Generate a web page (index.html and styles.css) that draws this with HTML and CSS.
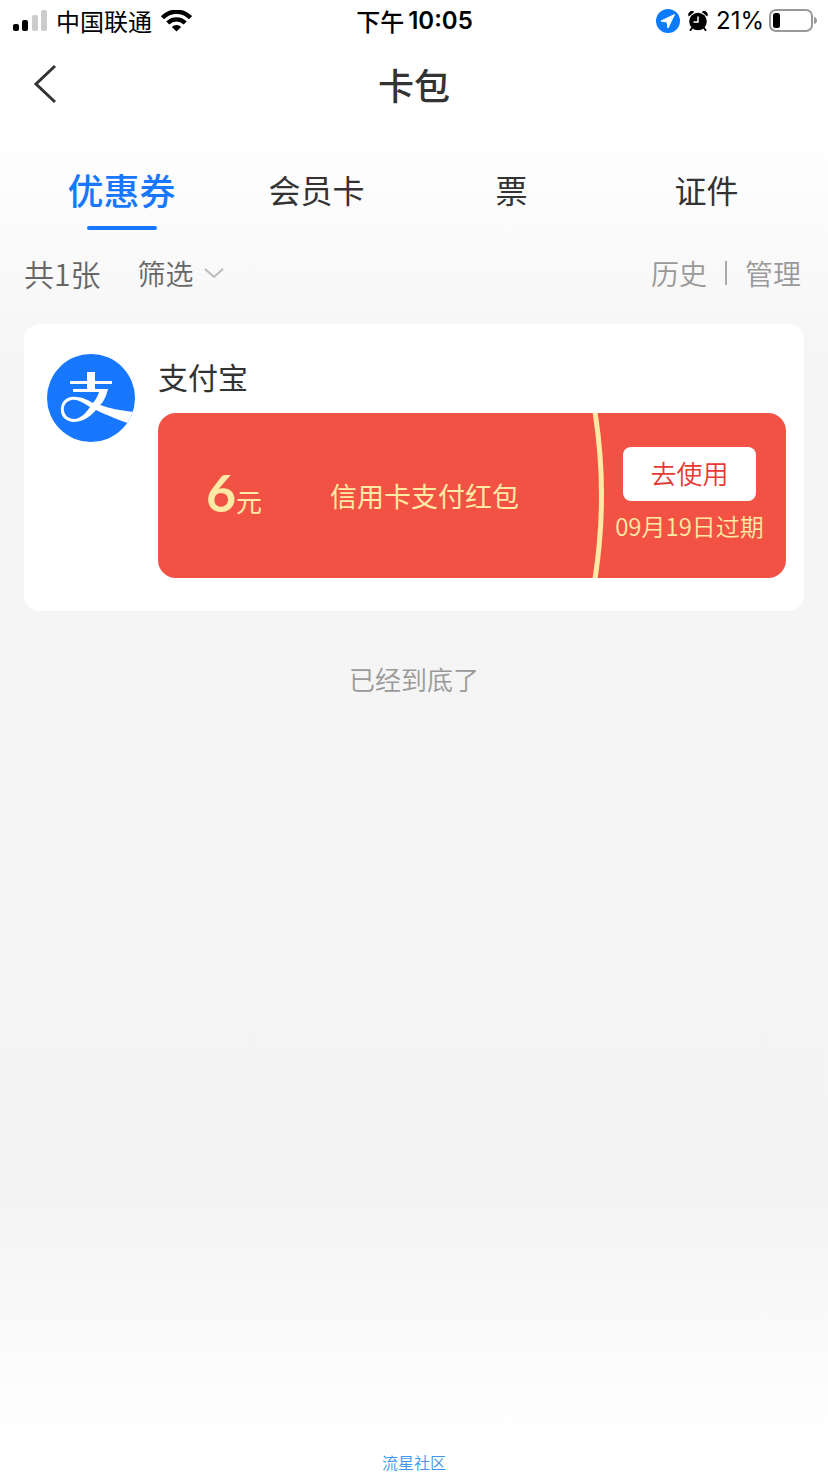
FILE: index.html
```html
<!DOCTYPE html>
<html lang="zh-CN">
<head>
<meta charset="utf-8">
<meta name="viewport" content="width=device-width, initial-scale=1">
<title>卡包</title>
<link rel="stylesheet" href="styles.css">
</head>
<body>
<div class="screen">
  <div class="status">
    <div class="status-left">
      <svg class="signal" width="36" height="22" viewBox="0 0 36 22" aria-hidden="true">
        <rect x="1" y="14" width="6" height="7" rx="2"/>
        <rect x="10" y="10" width="6" height="11" rx="2"/>
        <rect x="20" y="5" width="6" height="16" rx="2" fill="#cccccc"/>
        <rect x="29" y="0" width="6" height="21" rx="2" fill="#cccccc"/>
      </svg>
      <span>中国联通</span>
      <svg width="32" height="22" viewBox="0 0 32 22" aria-hidden="true">
        <g fill="none" stroke="#000" stroke-width="4.400">
          <path d="M2.500 7.700A19.500 19.500 0 0 1 30.500 7.700"/>
          <path d="M7.800 13A12.200 12.200 0 0 1 25.200 13"/>
        </g>
        <path d="M16.500 21.500L11.800 17A6.800 6.800 0 0 1 21.200 17Z"/>
      </svg>
    </div>
    <div class="time"><span>下午</span><span class="clock">10:05</span></div>
    <div class="status-right">
      <svg width="24" height="24" viewBox="0 0 24 24" aria-hidden="true">
        <circle cx="12" cy="12" r="12" fill="#0a7aff"/>
        <path d="M18.500 5.500L5 12 11 13 12 19Z" fill="#fff" stroke="#fff" stroke-linejoin="round"/>
      </svg>
      <svg class="alarm" width="20" height="20" viewBox="0 0 20 20" aria-hidden="true">
        <circle cx="10" cy="10.500" r="8.800"/>
        <path d="M.8 5.500A3.600 3.600 0 0 1 6.200.9ZM19.200 5.500A3.600 3.600 0 0 0 13.800.9Z"/>
        <path d="M4.500 16.500L2.500 19M15.500 16.500L17.500 19" stroke="#000" stroke-width="2" stroke-linecap="round"/>
        <path d="M10 5.500V11H5.500" fill="none" stroke="#fff" stroke-width="1.500"/>
      </svg>
      <span class="percent">21%</span>
      <svg width="49" height="24" viewBox="0 0 49 24" aria-hidden="true">
        <rect x="2" y="1" width="42" height="21" rx="6" fill="#fff" stroke="#999" stroke-width="2"/>
        <rect x="5" y="4" width="7" height="15" rx="2.500"/>
        <path d="M46 8Q49 9 49 11.500T46 15Z" fill="#999"/>
      </svg>
    </div>
  </div>

  <header class="nav">
    <button class="back" type="button" aria-label="返回">
      <svg width="26" height="40" viewBox="0 0 26 40" aria-hidden="true">
        <path d="M23 2L4 20 23 38" fill="none" stroke="#333" stroke-width="3"/>
      </svg>
    </button>
    <h1 class="title">卡包</h1>
  </header>

  <nav class="tabs">
    <a class="tab active" href="#coupons" aria-current="page">优惠券</a>
    <a class="tab" href="#members">会员卡</a>
    <a class="tab" href="#tickets">票</a>
    <a class="tab" href="#ids">证件</a>
  </nav>

  <main class="content">
    <div class="filters">
      <span class="count">共1张</span>
      <button class="filter" type="button">筛选
        <svg width="20" height="12" viewBox="0 0 20 12" aria-hidden="true">
          <path d="M1 2L10 10 19 2" fill="none" stroke="#bbb" stroke-width="2"/>
        </svg>
      </button>
      <div class="actions">
        <a href="#history">历史</a>
        <span class="divider"></span>
        <a href="#manage">管理</a>
      </div>
    </div>

    <section class="card">
      <svg class="logo" width="88" height="88" viewBox="0 0 88 88" aria-hidden="true">
        <defs><clipPath id="disc"><circle cx="44" cy="44" r="44"/></clipPath></defs>
        <circle cx="44" cy="44" r="44" fill="#1777ff"/>
        <g clip-path="url(#disc)" fill="#fff">
          <path d="M40 18H48V27H65V30H48V35H61Q58 47 53 51C62 54 74 57 89 58L84 70C73 67 60 61 49 56C42 64 35 68 26 68C17 67 13 61 14 54C15 46 21 42 29 43C35 43 41 46 46 49C49 45 51 42 52 38H26V35H40V30H23V27H40Z"/>
          <path d="M43 53C35 48 30 45 25 46C19 47 16 52 17 57C18 62 22 65 28 65C34 64 39 59 43 53Z" fill="#1777ff"/>
        </g>
      </svg>
      <div class="card-body">
        <h2 class="brand">支付宝</h2>
        <div class="coupon">
          <div class="amount"><span class="number">6</span><span class="unit">元</span></div>
          <div class="name">信用卡支付红包</div>
          <svg class="curve" width="14" viewBox="0 0 14 165" preserveAspectRatio="none" aria-hidden="true">
            <path d="M3 -1Q16 82 3 166" fill="none" stroke="#ffeaa5" stroke-width="5"/>
          </svg>
          <div class="claim">
            <button class="use" type="button">去使用</button>
            <span class="expiry">09月19日过期</span>
          </div>
        </div>
      </div>
    </section>
    <p class="end">已经到底了</p>
  </main>

  <footer class="footer">流星社区</footer>
</div>
</body>
</html>
```

FILE: styles.css
```css
* {
  box-sizing: border-box;
}

body {
  margin: 0;
  font-family: "Noto Sans CJK SC", "Noto Sans", sans-serif;
  color: #333;
}

a {
  color: inherit;
  text-decoration: none;
}

button {
  padding: 0;
  border: 0;
  background: none;
  color: inherit;
  font: inherit;
}

svg {
  display: block;
  flex: none;
}

h1,
h2,
p {
  margin: 0;
}

.screen {
  display: flex;
  flex-direction: column;
  min-height: 100vh;
  background: linear-gradient(#fff 130px, #fbfbfb 220px, #f5f5f5 370px, #f4f4f4 82%, #fff 98%);
}

.status {
  display: grid;
  grid-template-columns: 1fr auto 1fr;
  align-items: center;
  height: 41px;
  padding: 0 11px 0 12px;
  color: #000;
  font-size: 24px;
  line-height: 32px;
}

.status-left,
.status-right,
.time {
  display: flex;
  align-items: center;
}

.status-left {
  gap: 8px;
}

.status-right {
  justify-content: flex-end;
  gap: 4px;
}

.alarm {
  margin: 0 4px;
}

.time {
  gap: 4px;
  font-weight: 500;
}

.clock {
  font-family: Inter, sans-serif;
  font-weight: 600;
}

.percent {
  font-family: Inter, sans-serif;
}

.nav {
  display: grid;
  grid-template-columns: 1fr auto 1fr;
  align-items: center;
  height: 86px;
  padding: 0 32px;
}

.back {
  justify-self: start;
}

.title {
  font-size: 36px;
  font-weight: 500;
  line-height: 48px;
}

.tabs {
  display: grid;
  grid-template-columns: repeat(4, 1fr);
  padding: 32px 24px 0;
  font-size: 32px;
  line-height: 60px;
}

.tab {
  display: flex;
  flex-direction: column;
  align-items: center;
  height: 73px;
}

.active {
  color: #1777ff;
  font-size: 36px;
  font-weight: 500;
}

.active::after {
  content: "";
  width: 70px;
  height: 4px;
  margin-top: 7px;
  border-radius: 2px;
  background: #1777ff;
}

.content {
  flex: 1;
  padding: 15px 24px 0;
}

.filters {
  display: flex;
  align-items: center;
  height: 52px;
  color: #666;
  font-size: 28px;
  line-height: 40px;
  font-weight: 350;
}

.count {
  font-size: 30px;
}

.filter {
  display: flex;
  align-items: center;
  gap: 10px;
  margin-left: 37px;
}

.actions {
  display: flex;
  align-items: center;
  gap: 18px;
  margin-left: auto;
  padding-right: 3px;
  color: #999;
}

.divider {
  width: 2px;
  height: 24px;
  background: #aaa;
}

.card {
  display: flex;
  gap: 23px;
  margin-top: 25px;
  padding: 30px 18px 33px 23px;
  border-radius: 16px;
  background: #fff;
}

.card-body {
  flex: 1;
}

.brand {
  font-size: 30px;
  font-weight: 400;
  line-height: 44px;
}

.coupon {
  display: flex;
  align-items: center;
  height: 165px;
  margin-top: 15px;
  border-radius: 18px;
  background: #f25244;
  color: #ffeaa5;
}

.amount {
  flex: 1;
  padding: 0 20px 8px 0;
  text-align: center;
  white-space: nowrap;
}

.number {
  font: 700 52px/60px Lato, sans-serif;
}

.unit {
  font-size: 26px;
}

.name {
  flex: none;
  width: 262px;
  font-size: 27px;
}

.curve {
  align-self: stretch;
  height: 100%;
}

.claim {
  display: flex;
  flex: none;
  flex-direction: column;
  align-items: center;
  gap: 9px;
  width: 180px;
  padding: 0 13px 3px 0;
}

.use {
  width: 133px;
  height: 54px;
  padding-bottom: 2px;
  border-radius: 8px;
  background: #fff;
  color: #e83a34;
  font-size: 26px;
  font-weight: 350;
}

.expiry {
  font-size: 24px;
  font-weight: 350;
  line-height: 32px;
  white-space: nowrap;
}

.end {
  margin-top: 48px;
  color: #999;
  font-size: 26px;
  font-weight: 350;
  line-height: 40px;
  text-align: center;
}

.footer {
  color: #3d96ed;
  font-size: 16px;
  font-weight: 350;
  line-height: 20px;
  text-align: center;
}
```
